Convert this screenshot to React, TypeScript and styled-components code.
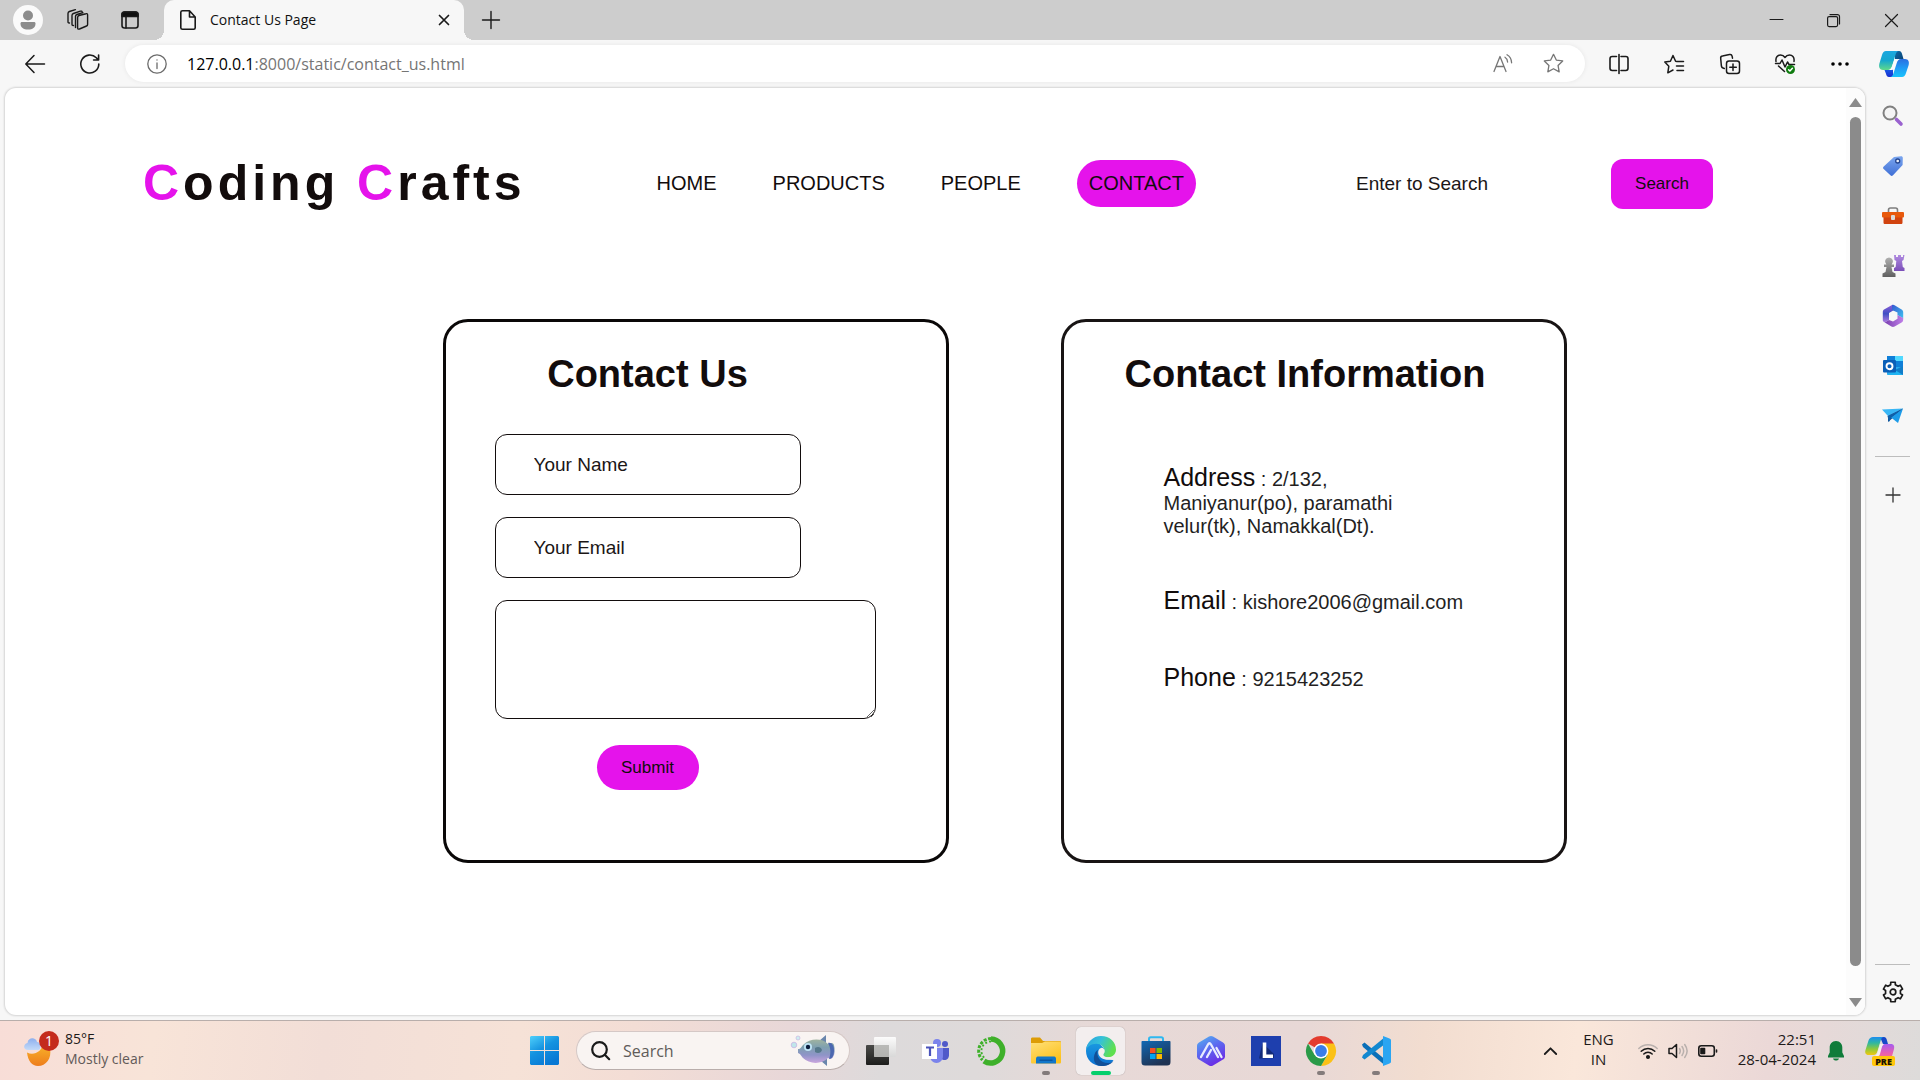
import React from 'react';
import styled, { createGlobalStyle, css } from 'styled-components';

const ui = `"Segoe UI", "Open Sans", "Noto Sans", sans-serif`;
const arial = `Arial, "Liberation Sans", sans-serif`;
const accent = '#e513eb';

const GlobalStyle = createGlobalStyle`
  *, *::before, *::after { box-sizing: border-box; }
  body { margin: 0; }
  button, input, textarea { font-family: inherit; margin: 0; }
  button { border: 0; background: none; padding: 0; }
  h1, h2, p, ul { margin: 0; padding: 0; }
  svg { display: block; overflow: visible; }
`;

/* ---------- window shell ---------- */

const Screen = styled.div`
  display: flex;
  flex-direction: column;
  height: 100vh;
  background: #f7f7f7;
  font-family: ${ui};
  overflow: hidden;
`;

const IconButton = styled.button<{ $w: number; $h?: number }>`
  display: flex;
  flex: none;
  align-items: center;
  justify-content: center;
  width: ${p => p.$w}px;
  height: ${p => (p.$h ? `${p.$h}px` : '100%')};
  color: #111;
`;

const TitleBar = styled.div`
  display: flex;
  flex: none;
  height: 40px;
  padding-left: 3px;
  background: #cdcdcd;
`;

const Tab = styled.div`
  position: relative;
  display: flex;
  align-items: center;
  width: 300px;
  margin-left: 8px;
  padding: 0 10px 0 16px;
  border-radius: 10px 10px 0 0;
  background: #f7f7f7;

  &::before, &::after {
    content: '';
    position: absolute;
    bottom: 0;
    width: 10px;
    height: 10px;
  }
  &::before { right: 100%; background: radial-gradient(circle at 0 0, #cdcdcd 10px, #f7f7f7 10px); }
  &::after { left: 100%; background: radial-gradient(circle at 100% 0, #cdcdcd 10px, #f7f7f7 10px); }
`;

const TabTitle = styled.span`
  flex: 1;
  padding-left: 14px;
  font-size: 14px;
  line-height: 20px;
  color: #111;
`;

const WindowControls = styled.div`
  display: flex;
  margin-left: auto;
`;

const Toolbar = styled.div`
  display: flex;
  flex: none;
  align-items: center;
  height: 47px;
  padding-left: 13px;
`;

const NavButtons = styled.div`
  display: flex;
  gap: 11px;
  margin-right: 13px;
`;

const AddressBar = styled.div`
  display: flex;
  flex: 1;
  align-items: center;
  height: 37px;
  margin-right: 6px;
  padding: 0 7px 0 12px;
  border-radius: 19px;
  background: #fff;
  box-shadow: 0 0 5px rgba(0, 0, 0, 0.07);
`;

const Url = styled.div`
  flex: 1;
  padding-left: 10px;
  font-size: 16px;
  line-height: 24px;
  color: #757575;
`;

const UrlHost = styled.span`
  color: #000;
`;

const Main = styled.div`
  display: flex;
  flex: 1;
  min-height: 0;
`;

const Frame = styled.div`
  display: flex;
  flex: 1;
  margin: 1px 0 5px 5px;
  border-radius: 11px;
  background: #fff;
  box-shadow: 0 0 2px 1px rgba(0, 0, 0, 0.14);
  overflow: hidden;
`;

const ScrollTrack = styled.div`
  display: flex;
  flex: none;
  flex-direction: column;
  align-items: center;
  gap: 10px;
  width: 19px;
  padding: 10px 0 8px;
  background: #fcfcfc;
`;

const ScrollThumb = styled.div`
  flex: 1;
  width: 11px;
  margin-bottom: 22px;
  border-radius: 6px;
  background: #8b8b8b;
`;

const Sidebar = styled.aside`
  display: flex;
  flex: none;
  flex-direction: column;
  align-items: center;
  width: 55px;
  padding: 4px 0 3px;
`;

const Rule = styled.hr<{ $push?: boolean }>`
  width: 35px;
  height: 1px;
  margin: ${p => (p.$push ? 'auto' : '15px')} 0 ${p => (p.$push ? '2px' : '13px')};
  border: 0;
  background: #bdbdbd;
`;

/* ---------- web page ---------- */

const Page = styled.div`
  flex: 1;
  min-width: 0;
  padding-top: 67px;
  font-family: ${arial};
  color: #120c0c;
`;

const Header = styled.header`
  display: flex;
  align-items: center;
  padding: 0 133px 0 138px;
`;

const Logo = styled.h1`
  font-size: 50px;
  font-weight: bold;
  line-height: 57px;
  letter-spacing: 4px;
  white-space: nowrap;
`;

const Initial = styled.span`
  color: ${accent};
`;

const Menu = styled.nav`
  display: flex;
  align-items: center;
  gap: 56px;
  margin-left: 131px;
`;

const MenuLink = styled.a<{ $active?: boolean }>`
  font-size: 20px;
  line-height: 23px;
  color: #120c0c;
  text-decoration: none;
  ${p => p.$active && css`
    padding: 12px;
    border-radius: 25px;
    background: ${accent};
  `}
`;

const fieldText = css`
  font-size: 19px;
  color: #120c0c;
  outline: 0;
  &::placeholder { color: #1b1616; opacity: 1; }
`;

const SearchForm = styled.form`
  display: flex;
  align-items: center;
  gap: 24px;
  margin-left: auto;
`;

const SearchInput = styled.input`
  ${fieldText}
  width: 270px;
  height: 50px;
  padding: 0 39px;
  border: 0;
  background: transparent;
`;

const ActionButton = styled.button<{ $round?: boolean }>`
  width: 102px;
  height: ${p => (p.$round ? 45 : 50)}px;
  border-radius: ${p => (p.$round ? 25 : 12)}px;
  background: ${accent};
  font-size: 17px;
  color: #120c0c;
`;

const Cards = styled.main`
  display: flex;
  justify-content: center;
  gap: 112px;
  margin-top: 107px;
  padding-left: 158px;
`;

const Card = styled.section<{ $pad: string; $tone: string }>`
  width: 506px;
  padding: ${p => p.$pad};
  border: 3px solid ${p => p.$tone};
  border-radius: 25px;
`;

const CardTitle = styled.h2`
  font-size: 38px;
  font-weight: bold;
  line-height: 44px;
  white-space: nowrap;
`;

const ContactForm = styled.form`
  display: grid;
  grid-template-columns: 306px 1fr;
  row-gap: 22px;

  & > * { grid-column: 1; }
  & > ${CardTitle} { margin-bottom: 16px; text-align: center; }
  & > ${ActionButton} { justify-self: center; margin-top: 4px; }
`;

const boxed = css`
  ${fieldText}
  border: 1px solid #120c0c;
  border-radius: 12px;
  background: transparent;
`;

const TextField = styled.input`
  ${boxed}
  width: 100%;
  height: 61px;
  padding: 0 38px;
`;

const MessageField = styled.textarea`
  ${boxed}
  && { grid-column: 1 / -1; }
  display: block;
  height: 119px;
  padding: 12px 38px;
  resize: both;
`;

const InfoList = styled.div`
  display: flex;
  flex-direction: column;
  gap: 48px;
  margin: 67px 0 0 39px;
`;

const InfoLine = styled.p`
  font-size: 20px;
  white-space: nowrap;
  color: #241f1f;
`;

const InfoLabel = styled.span`
  font-size: 25px;
  color: #120c0c;
`;

/* ---------- taskbar ---------- */

const Taskbar = styled.footer`
  display: grid;
  flex: none;
  grid-template-columns: 1fr auto 1fr;
  align-items: center;
  height: 60px;
  border-top: 1px solid #b8aeab;
  background: linear-gradient(96deg, #f8ddd7 0%, #f8e4d8 8%, #f2ded7 17%, #f6e2d7 27%, #f3ddd5 33%, #e8d7d8 41%,
    #dddadb 46%, #dedada 51%, #e7d9d7 57%, #e8d8d6 68%, #f2ddd0 74%, #fae7da 82%, #ebd8d7 92%, #dddbda 100%);
`;

const TwoLines = styled.span<{ $align?: string }>`
  display: flex;
  flex-direction: column;
  padding-bottom: 4px;
  font-size: 15px;
  line-height: 20px;
  text-align: ${p => p.$align || 'left'};
  color: #1d1a19;
`;

const Weather = styled.button`
  display: flex;
  align-items: center;
  gap: 12px;
  justify-self: start;
  padding: 0 0 4px 24px;
  text-align: left;

  ${TwoLines} { padding-bottom: 0; font-size: 14px; }
`;

const Muted = styled.span`
  color: #625a58;
`;

const Apps = styled.div`
  display: flex;
  align-items: center;
  height: 59px;
`;

const AppButton = styled.button<{ $mark?: 'open' | 'active' }>`
  position: relative;
  display: flex;
  align-items: center;
  justify-content: center;
  width: 49px;
  height: 48px;
  margin: 0 3px;
  border-radius: 5px;
  background: ${p => (p.$mark === 'active' ? '#f3eeee' : 'none')};
  box-shadow: ${p => (p.$mark === 'active' ? '0 0 1px rgba(0,0,0,.35)' : 'none')};

  &::after {
    content: '';
    position: absolute;
    bottom: 0;
    display: ${p => (p.$mark ? 'block' : 'none')};
    width: ${p => (p.$mark === 'active' ? 20 : 8)}px;
    height: 4px;
    border-radius: 2px;
    background: ${p => (p.$mark === 'active' ? '#06cf6c' : '#837b7b')};
  }
`;

const TaskSearch = styled.label`
  display: flex;
  align-items: center;
  width: 274px;
  height: 39px;
  margin: 0 3px 0 4px;
  padding: 0 14px;
  border: 1px solid #d5c8c6;
  border-bottom-color: #b9adab;
  border-radius: 20px;
  background: #f9f4f2;
`;

const TaskSearchInput = styled.input`
  flex: 1;
  min-width: 0;
  padding: 0 0 0 13px;
  border: 0;
  outline: 0;
  background: none;
  font-size: 16px;
  &::placeholder { color: #605b59; opacity: 1; }
`;

const Tray = styled.div`
  display: flex;
  align-items: center;
  justify-self: end;
  padding-right: 15px;
`;

const Language = styled.button`
  margin-left: 18px;
`;

const TrayGroup = styled.button`
  display: flex;
  align-items: center;
  gap: 10px;
  margin: 0 20px 0 24px;
`;

/* ---------- drawings ---------- */

type GlyphProps = { w?: number; h?: number; sw?: number; color?: string; children: React.ReactNode };

const Glyph = ({ w = 20, h = w, sw = 1.4, color = '#1a1a1a', children }: GlyphProps) => (
  <svg width={w} height={h} viewBox={`0 0 ${w} ${h}`} fill="none" stroke={color} strokeWidth={sw}
    strokeLinecap="round" strokeLinejoin="round" aria-hidden="true">{children}</svg>
);

const Art = ({ w = 30, h = w, box, children }: { w?: number; h?: number; box?: string; children: React.ReactNode }) => (
  <svg width={w} height={h} viewBox={box || `0 0 ${w} ${h}`} aria-hidden="true">{children}</svg>
);

const Grad = ({ id, stops, x2 = 0, y2 = 1 }: { id: string; stops: string[]; x2?: number; y2?: number }) => (
  <linearGradient id={id} x1="0" y1="0" x2={x2} y2={y2}>
    {stops.map((c, i) => <stop key={i} offset={i / (stops.length - 1)} stopColor={c} />)}
  </linearGradient>
);

const Plus = () => <Glyph w={18}><path d="M9 0.5v17M0.5 9h17" /></Glyph>;

const Star = 'M12 1.5l3.2 6.6 7.3 1-5.3 5.1 1.3 7.3L12 18l-6.5 3.5 1.3-7.3L1.5 9.1l7.3-1z';

const CopilotIcon = () => (
  <Art w={30} h={28}>
    <defs>
      <Grad id="cpA" stops={['#1ba7e0', '#16a8cf', '#5fd98a']} />
      <Grad id="cpB" stops={['#2b6fe0', '#1f9bf5', '#19c3fb']} />
      <Grad id="cpC" stops={['#0d6aa8', '#0b3f70']} x2={1} />
      <Grad id="cpD" stops={['#1660e8', '#1a2fd0']} />
    </defs>
    <path d="M16 1h4c2 0 2.600 1.500 3.200 3.500L24.500 9h-4C18.500 9 17 9 16 11z" fill="url(#cpC)" />
    <path d="M14 27h-4c-2 0-2.500-1.500-3.100-3.500L5.500 20h4.500c2 0 3 0 4-2z" fill="url(#cpD)" />
    <path d="M7 1h13c-2 0-3 2-3.600 4l-3 10.500c-.8 2.800-2 4.500-4.400 4.500H4c-3.500 0-4.500-3-3.600-6.500L3 5C3.800 2.300 5 1 7 1z" fill="url(#cpA)" />
    <path d="M23 27H11c2 0 3-2 3.600-4l3-9.500C18.500 10.500 19.600 9 22 9h4c3.500 0 4.500 3 3.600 6.200L27 23c-.8 2.700-2 4-4 4z" fill="url(#cpB)" />
    <path d="M15.500 9h4c-1.500 1-2 2.500-2.600 4.500l-1.400 4.500c-.5 1.300-1.300 2-2.500 2h-3c1.700-.8 2.500-2.200 3.200-4.500z" fill="#f9fbfc" />
  </Art>
);

const CopilotPreview = () => (
  <Art w={30} h={30}>
    <defs>
      <Grad id="pvA" stops={['#1c8df0', '#2fb7a0', '#8fc93a', '#f2c810']} />
      <Grad id="pvB" stops={['#a55cf0', '#e85fb0', '#fb7f70']} />
    </defs>
    <path d="M15 1h4c1.500 0 2.200 1 2.700 2.500L23 8h-5z" fill="#1748c9" />
    <path d="M8 1h11c-2 0-3 2-3.500 4l-3 10c-.7 2.500-2 4-4 4H3.500C.5 19-.3 16.500.5 14L3.500 4.500C4.200 2.200 6 1 8 1z" fill="url(#pvA)" />
    <path d="M23 26H10c2 0 3-2 3.500-4l2.500-9.500C16.800 9.500 18 8 20 8h6c2.800 0 3.700 2.300 3 5l-2.500 9C26 24 25 26 23 26z" fill="url(#pvB)" />
    <path d="M15 8h4c-1.500 1-2 2.500-2.500 4.500L15 18c-.4 1.300-1 2-2.200 2H10c1.500-.8 2.200-2.200 2.800-4.500z" fill="#f4eeee" />
    <rect x="7" y="20" width="23" height="10" rx="2" fill="#ffc60a" />
    <text x="18.500" y="28.500" textAnchor="middle" fontFamily={ui} fontSize="9" fontWeight="800" fill="#1a1200">PRE</text>
  </Art>
);

const SideSearch = () => (
  <Art w={22}>
    <circle cx="8" cy="8" r="6.500" fill="#f4f4f4" stroke="#808080" strokeWidth="2" />
    <path d="M14.500 14.500l4.500 4.500" stroke="#9a62cf" strokeWidth="3.600" strokeLinecap="round" />
  </Art>
);

const SideTag = () => (
  <Art w={22}>
    <defs><Grad id="tg" stops={['#7ba6ee', '#3f6fd6']} /></defs>
    <path d="M12 2l7-.8c1.300 0 1.800.6 1.800 1.800L20.600 10 11 20.300c-.9.9-1.700.9-2.600 0L1.700 14c-.9-.9-.9-1.700 0-2.600z" fill="url(#tg)" />
    <circle cx="15.700" cy="6" r="2" fill="#e8effc" stroke="#24458f" strokeWidth="1.300" />
  </Art>
);

const SideToolbox = () => (
  <Art w={22} h={18}>
    <path d="M6.500 6V3c0-1.500.6-2 2-2h5c1.400 0 2 .5 2 2v3" fill="none" stroke="#7d7d7d" strokeWidth="1.600" />
    <path d="M1.500 9h19v6.500c0 1.100-.6 1.500-1.500 1.500H3c-.9 0-1.500-.4-1.500-1.500z" fill="#d1430f" />
    <rect x="0" y="5" width="22" height="5.500" rx="1" fill="#e8590c" />
    <rect x="9" y="8" width="4" height="5" rx="1" fill="#dadada" />
  </Art>
);

const SideGames = () => (
  <Art w={22}>
    <defs><Grad id="rk" stops={['#b08be0', '#7b4fb8']} /><Grad id="pw" stops={['#b0b0b0', '#606060']} /></defs>
    <path d="M12 0h2v2h2V0h3v2h2V0h1.500l-1 5-1.500 1 .8 6 1.700 1v3H12v-3l1.700-1 .6-6-1.800-1z" fill="url(#rk)" />
    <path d="M7 2.500a4 4 0 0 1 2.600 7H12v2.500H9.500l1 5 3 1.500v3.500H.5v-3.500l3-1.500 1-5H2V9.500h2.400a4 4 0 0 1 2.600-7z" fill="url(#pw)" />
  </Art>
);

const SideM365 = () => (
  <Art w={22}>
    <defs>
      <Grad id="mA" stops={['#8a5bd6', '#3f4fc4', '#b07be0']} />
      <Grad id="mB" stops={['#3558d0', '#3fc1f0']} x2={1} />
      <Grad id="mC" stops={['#7a3fb0', '#c080e8']} x2={1} y2={0} />
    </defs>
    <path d="M10 0L2.500 4.200C1.200 5 .8 5.800.8 7.200v8c0 1 .8 1.800 2 2.300L7 15V8l5-3z" fill="url(#mA)" />
    <path d="M10 0c1-.4 2-.2 3 .4l6.600 4c1 .6 1.600 1.600 1.600 2.800v6L15.500 10V7.500L10 5z" fill="url(#mB)" />
    <path d="M21.200 13v1.800c0 1.200-.6 2.200-1.600 2.800l-7 4c-1 .6-2.200.6-3.200 0L2.800 17.500 7 15l4 1.500 4.500-2.800V10z" fill="url(#mC)" />
  </Art>
);

const SideOutlook = () => (
  <Art w={22}>
    <rect x="5" y="1" width="16" height="19" rx="1" fill="#28a8ea" />
    <path d="M5 1h8v5H5zM13 6h8v6h-8z" fill="#0f7fd8" />
    <path d="M13 1h8v5h-8z" fill="#50d9ff" />
    <path d="M5 20l16-8.500V20z" fill="#1fb4f2" /><path d="M21 20l-8-5 8-4z" fill="#117dc9" />
    <rect x="1" y="5" width="13" height="12.500" rx="1" fill="#0a5fb8" />
    <circle cx="7.500" cy="11.200" r="3" fill="none" stroke="#fff" strokeWidth="1.900" />
  </Art>
);

const SidePlane = () => (
  <Art w={22} h={16}>
    <path d="M0 1.500L21 .5 6 8z" fill="#38b6f5" />
    <path d="M21 .5L6 8l0 6 3.500-3z" fill="#0d4f94" />
    <path d="M21 .5L9 9.500l7 5.500z" fill="#1c9be8" />
    <path d="M5.500 8L21 .5 9 9.500 7 14z" fill="#0f5fa8" />
  </Art>
);

const Gear = () => {
  const pts = Array.from({ length: 6 }, (_, i) => {
    const at = (deg: number, r: number) => {
      const a = ((i * 60 + deg) * Math.PI) / 180;
      return `${(11 + r * Math.sin(a)).toFixed(2)} ${(11 - r * Math.cos(a)).toFixed(2)}`;
    };
    return `${at(-13, 10)}L${at(13, 10)}L${at(18, 7.6)}L${at(42, 7.6)}`;
  });
  return <Glyph w={22} sw={1.7}><path d={`M${pts.join('L')}Z`} /><circle cx="11" cy="11" r="2.800" /></Glyph>;
};

const WeatherIcon = () => (
  <Art w={29} h={36}>
    <defs><Grad id="moon" stops={['#f8b62a', '#ee7d1c']} /><Grad id="cloud" stops={['#8db0ee', '#c4daf8']} /></defs>
    <path d="M3 21.500c7 3.500 15-1 16-9l7 5c2 10-4 17.500-12 17.500-6 0-10-5-11-13.500z" fill="url(#moon)" />
    <path d="M4 19c-5 0-5-6-.5-7C4 6 12 6 13 11c4 0 5 8 1 8z" fill="url(#cloud)" />
    <circle cx="25" cy="10" r="10" fill="#c42b1c" />
    <text x="25" y="15" textAnchor="middle" fontFamily={ui} fontSize="14" fill="#fff">1</text>
  </Art>
);

const WindowsIcon = () => (
  <Art w={29}>
    <defs><Grad id="win" stops={['#4fd0fb', '#1593e0', '#0878d4']} x2={0.6} /></defs>
    <path d="M1 0h13v14H0V1zM15 0h13l1 1v13H15zM0 15h14v14H1l-1-1zM15 15h14v13l-1 1H15z" fill="url(#win)" />
  </Art>
);

const Fish = () => (
  <Art w={44} h={32}>
    <defs><Grad id="fish" stops={['#9fb3a0', '#7fa0b0', '#8f94c8', '#c9a5dd']} /></defs>
    <path d="M28 6l7-6v10zM30 26l6 5V22z" fill="#6a86ac" />
    <path d="M7 14c3 0 3-2 5-4 7-7 19-7 25-1 2-1 5-2 6 1 1 4 1 9-1 12-1 2-3 2-5 1-7 7-19 6-25 0-2-2-2-4-5-5z" fill="url(#fish)" />
    <path d="M37 8c4-1 6 3 6 7s-1 9-5 9c2-5 2-11-1-16z" fill="#4c68b0" />
    <path d="M24 13c3-2 6-1 7 2-1 3-4 4-7 2z" fill="#55788a" />
    <circle cx="17" cy="12" r="4" fill="#bfe4f5" /><circle cx="17" cy="12" r="2.200" fill="#0c1c3c" />
    <circle cx="3" cy="10" r="2.800" fill="#bfe6ea" stroke="#c9b5e2" strokeWidth=".8" />
    <circle cx="7" cy="3" r="2" fill="#cdeef0" stroke="#c9b5e2" strokeWidth=".7" />
  </Art>
);

const TaskViewIcon = () => (
  <Art w={30}>
    <defs><Grad id="tv" stops={['#4a4a48', '#1d1d1c']} /><Grad id="tw" stops={['#ffffff', '#d8d8d8']} /></defs>
    <rect x="0" y="9" width="23" height="20" rx="1" fill="url(#tv)" />
    <rect x="8" y="1" width="22" height="20" rx="1" fill="url(#tw)" fillOpacity=".9" />
    <path d="M8 9h15v12H8z" fill="#a9a9a7" fillOpacity=".7" />
  </Art>
);

const TeamsIcon = () => (
  <Art w={28} h={26}>
    <circle cx="15" cy="5" r="4" fill="#7b83eb" /><circle cx="23" cy="6" r="3" fill="#5059c9" />
    <path d="M18 10h9v7c0 3-2 5-4.500 5S18 20 18 17z" fill="#5059c9" />
    <path d="M8 10h13v8c0 4-3 7-6.500 7S8 22 8 18z" fill="#7b83eb" />
    <rect x="0" y="6" width="15" height="15" fill="#fff" />
    <path d="M4 9.500h8M8 9.500v8.500" stroke="#4b53bc" strokeWidth="2.200" />
  </Art>
);

const RingIcon = () => (
  <Art w={30}>
    <path d="M15 3a12 12 0 1 1-7 22" fill="none" stroke="#3eb02a" strokeWidth="5.500" />
    <path d="M15 2.500A12.500 12.500 0 0 0 6.500 24" fill="none" stroke="#3eb02a" strokeWidth="3" strokeDasharray="3 1.500" />
    <path d="M15 5.500A9.500 9.500 0 0 0 8.500 22" fill="none" stroke="#3eb02a" strokeWidth="1.800" strokeDasharray="2 2" />
  </Art>
);

const FolderIcon = () => (
  <Art w={30} h={28}>
    <defs><Grad id="fold" stops={['#ffe07a', '#fcc21f']} y2={1} x2={0.6} /></defs>
    <path d="M0 2c0-1 .5-1.500 1.500-1.500H9L12 4h16.500c1 0 1.500.5 1.500 1.500V10H0z" fill="#dd9c05" />
    <path d="M0 6h11l3-1.500h14.500c1 0 1.500.5 1.500 1.500v19c0 1-.5 1.500-1.500 1.500h-27C.5 26.500 0 26 0 25z" fill="url(#fold)" />
    <path d="M5 22c0-2 1-2.500 2.500-2.500h15c1.500 0 2.500.5 2.500 2.500v4.500H5z" fill="#1277ca" />
    <path d="M8.500 23.200h13" stroke="#0a4f98" strokeWidth="1.200" />
  </Art>
);

const EdgeIcon = () => (
  <Art w={30} box="0 0 24 24">
    <defs>
      <Grad id="edA" stops={['#2a9fe0', '#35c1d9', '#5fe04f']} x2={1} y2={0.4} />
      <Grad id="edB" stops={['#1b9de2', '#0b6fd0']} />
    </defs>
    <path d="M0 12C0 5 5.500 3 9 4l5.500 6-1 8 8.500 1.300C19.800 22.500 16 24 12.300 24 5.500 24 0 18.800 0 12z" fill="url(#edB)" />
    <path d="M9.500 11c-2 6 3 11.500 9.500 10.500 1.500-.3 2.500-1 2.800-1.300C19.500 23 16 24 12.500 24 8 24 6 20.500 6.300 17c.3-3 1.600-5 3.200-6z" fill="#114f97" />
    <path d="M0 11.500C.5 5 5.500 0 12 0c7 0 12 5 12 10.800 0 3.600-2.700 6.200-6.200 6.200-3 0-4-1.200-4-2 0-.7 1-1 1-3C14.800 9 12 6.200 8.300 6.200 4 6.200.7 8.500 0 11.500z" fill="url(#edA)" />
    <path d="M14.800 12c0 2-1 2.300-1 3 0 .8 1 2 4 2 1.700 0 3.200-.4 4.200-1.300l-.2 2.300c-5 2.500-11.500 0-12-4.500-.2-2 .8-3.700 2.400-4 1.600-.2 2.600 1 2.600 2.500z" fill="#f3eeee" />
  </Art>
);

const StoreIcon = () => (
  <Art w={30}>
    <defs><Grad id="st" stops={['#1168b4', '#1f3353']} x2={0.5} /></defs>
    <path d="M8 7V3c0-1 .5-1.800 1.800-1.800h10.400C21.500 1.200 22 2 22 3v4" fill="none" stroke="#2fb8f0" strokeWidth="2" />
    <path d="M1.500 5h27c.6 0 1 .3 1 1v20c0 2.500-1 3.500-3.500 3.500H4C1.500 29.500.5 28.500.5 26V6c0-.7.4-1 1-1z" fill="url(#st)" />
    <path d="M9 12h5.500v5H9z" fill="#f25022" /><path d="M15.500 12H21v5h-5.500z" fill="#7fba00" />
    <path d="M9 18h5.500v5H9z" fill="#00a4ef" /><path d="M15.500 18H21v5h-5.500z" fill="#ffb900" />
  </Art>
);

const HexIcon = () => (
  <Art w={28} h={30}>
    <defs><Grad id="hx" stops={['#53b8f0', '#5b6af0', '#6a2fe6']} x2={0.5} /></defs>
    <path d="M12 .6c1.300-.7 2.700-.7 4 0l10 5.800c1.300.8 2 1.800 2 3.400v10.400c0 1.600-.7 2.600-2 3.400l-10 5.800c-1.300.7-2.700.7-4 0L2 23.600c-1.300-.8-2-1.800-2-3.400V9.800c0-1.600.7-2.600 2-3.400z" fill="url(#hx)" />
    <path d="M4 21l7-12.500c1-1.700 2-1.700 3 0L21 21M10 21l4-7M19.500 12l5 9" fill="none" stroke="#e8ecff" strokeWidth="2.300" strokeLinecap="round" />
  </Art>
);

const LIcon = () => (
  <Art w={30}>
    <path d="M0 0h30v30H0z" fill="#1e3fae" />
    <path d="M11.500 7L8 22.500h5L23 22v-4z" fill="#122a78" />
    <path d="M13.500 6.500V20.200H22" fill="none" stroke="#fff" strokeWidth="3.600" />
  </Art>
);

const ChromeIcon = () => (
  <Art w={30}>
    <path d="M15 15L2 7.500A15 15 0 0 1 28 7.500z" fill="#e33b2e" />
    <path d="M15 15V7.500h13A15 15 0 0 1 15 30l6.500-11z" fill="#fbc116" />
    <path d="M15 15l6.500 3.700L15 30A15 15 0 0 1 2 7.500l6.500 11.300z" fill="#2a9a48" />
    <circle cx="15" cy="15" r="7.400" fill="#fff" /><circle cx="15" cy="15" r="5.900" fill="#3a7de8" />
  </Art>
);

const CodeIcon = () => (
  <Art w={30}>
    <path d="M1 8.500l2.500-2 20 16.500V29L2 11z" fill="#0a6fb8" />
    <path d="M1 21.500l2.500 2L24 8V1L2 19z" fill="#1288d0" />
    <path d="M22 0l6.500 2.500c1 .5 1.500 1 1.500 2v21c0 1-.5 1.500-1.500 2L22 30z" fill="#2aa5f2" />
  </Art>
);

/* ---------- content ---------- */

const sideItems: [string, React.ReactNode][] = [
  ['Search', <SideSearch />], ['Shopping', <SideTag />], ['Tools', <SideToolbox />], ['Games', <SideGames />],
  ['Microsoft 365', <SideM365 />], ['Outlook', <SideOutlook />], ['Drop', <SidePlane />],
];

const apps: [string, React.ReactNode, ('open' | 'active')?][] = [
  ['Task view', <TaskViewIcon />], ['Teams', <TeamsIcon />], ['Anaconda', <RingIcon />],
  ['File Explorer', <FolderIcon />, 'open'], ['Edge', <EdgeIcon />, 'active'], ['Store', <StoreIcon />],
  ['Assistant', <HexIcon />], ['Launcher', <LIcon />], ['Chrome', <ChromeIcon />, 'open'],
  ['Visual Studio Code', <CodeIcon />, 'open'],
];

const BrowserTitleBar = () => (
  <TitleBar>
    <IconButton $w={50} aria-label="Profile">
      <Art w={30}><circle cx="15" cy="15" r="15" fill="#fafafa" /><circle cx="15" cy="10.500" r="5" fill="#8c8c8c" />
        <path d="M7.500 18.500c0-1 .6-1.500 1.500-1.500h12c.9 0 1.500.5 1.500 1.500 0 4-3 6-7.500 6s-7.500-2-7.500-6z" fill="#8c8c8c" /></Art>
    </IconButton>
    <IconButton $w={50} aria-label="Workspaces">
      <Glyph w={22}><path d="M12 6.500l7-1.800c1-.3 1.600.2 1.600 1.200v9.500c0 .8-.3 1.300-1.100 1.600l-7 3c-1 .4-1.900 0-1.900-1.100V8.500c0-1 .5-1.700 1.400-2zM6.500 16.500c-1 .2-1.500-.3-1.500-1.200V6.500c0-1 .5-1.700 1.400-2l7-2.300c1-.3 1.800 0 1.800 1M2.500 14c-1 .2-1.500-.3-1.500-1.200V4.500c0-1 .5-1.700 1.400-2l6-1.900M8.500 18.500V7.500c0-1 .5-1.700 1.400-2l6-1.900" /></Glyph>
    </IconButton>
    <IconButton $w={53} aria-label="Tab actions">
      <Glyph w={18} sw={1.6}><rect x="1" y="1" width="16" height="16" rx="2.500" /><path d="M1 3.500A2.500 2.500 0 0 1 3.500 1h11A2.500 2.500 0 0 1 17 3.500V5.500H1z" fill="#111" /><path d="M5 6v11" /></Glyph>
    </IconButton>
    <Tab>
      <Glyph w={16} h={20} sw={1.6}><path d="M2.500.8h7L15.200 7v10.700c0 1-.6 1.500-1.500 1.500H2.500C1.500 19.200.8 18.700.8 17.700V2.300c0-1 .7-1.500 1.700-1.500zM9.500.8V7h5.700" /></Glyph>
      <TabTitle>Contact Us Page</TabTitle>
      <IconButton $w={20} aria-label="Close tab"><Glyph w={10} sw={1.7}><path d="M.5.5l9 9M9.500.5l-9 9" /></Glyph></IconButton>
    </Tab>
    <IconButton $w={53} aria-label="New tab"><Plus /></IconButton>
    <WindowControls>
      <IconButton $w={58} aria-label="Minimise"><Glyph w={13} h={2} sw={1}><path d="M0 .5h13" /></Glyph></IconButton>
      <IconButton $w={57} aria-label="Restore"><Glyph w={13} sw={1.2}><rect x=".6" y="2.600" width="10" height="10" rx="1.500" /><path d="M3 .6h7.500a2 2 0 0 1 2 2V10" /></Glyph></IconButton>
      <IconButton $w={58} aria-label="Close"><Glyph w={13} sw={1.2}><path d="M.5.5l12 12M12.500.5l-12 12" /></Glyph></IconButton>
    </WindowControls>
  </TitleBar>
);

const BrowserToolbar = () => (
  <Toolbar>
    <NavButtons>
      <IconButton $w={44} aria-label="Back"><Glyph sw={1.5}><path d="M19.500 10H1M9 1.500L.8 10 9 18.500" /></Glyph></IconButton>
      <IconButton $w={44} aria-label="Refresh"><Glyph sw={1.6}><path d="M18.800 10a9 9 0 1 1-2.500-6.200L18 5.600M18.600 1v5h-5" /></Glyph></IconButton>
    </NavButtons>
    <AddressBar>
      <IconButton $w={40} aria-label="Site information"><Glyph color="#6b6b6b" sw={1.3}><circle cx="10" cy="10" r="9.200" /><path d="M10 9v5.500M10 5.800v.3" /></Glyph></IconButton>
      <Url><UrlHost>127.0.0.1</UrlHost>:8000/static/contact_us.html</Url>
      <IconButton $w={50} aria-label="Read aloud"><Glyph color="#767676" sw={1.3}><path d="M1 17.500L7 2.500l6 15M3.200 12.500h7.600M12 3.200c1.700 1 2.500 2.600 2.600 4.800M14 .8c3 1.700 4.500 4.500 4.600 8" /></Glyph></IconButton>
      <IconButton $w={50} aria-label="Add to favourites"><svg width="21" height="21" viewBox="0 0 24 24" fill="none" stroke="#767676" strokeWidth="1.500" strokeLinejoin="round"><path d={Star} /></svg></IconButton>
    </AddressBar>
    <IconButton $w={55} aria-label="Split screen"><Glyph w={20} sw={1.6}><path d="M7.500 2.500H3.200C1.800 2.500 1 3.300 1 4.700v9.600c0 1.400.8 2.200 2.200 2.200h4.300M12 2.500h4.800c1.400 0 2.200.8 2.200 2.200v9.600c0 1.400-.8 2.200-2.200 2.200H12M10 .5v19" /></Glyph></IconButton>
    <IconButton $w={56} aria-label="Favourites"><Glyph w={20} sw={1.5}><path d="M13 7.500l-1.400-.2L9 1.500 6.400 7.300.8 8l4 4.300-1 6.500L9 16M13 7.500h6.500M12.500 12h7M13 16.500h6.500" /></Glyph></IconButton>
    <IconButton $w={55} aria-label="Collections"><Glyph w={20} sw={1.5}><rect x="6.500" y="7" width="13" height="12.500" rx="2.500" /><path d="M13 10v6.500M9.800 13.200h6.500M4.300 14.500L3 14c-1-.3-1.400-1-1.600-2L.7 4.500c-.2-1.300.4-2.200 1.700-2.400L9.500.6c1.300-.3 2.300.3 2.600 1.600l.4 2" /></Glyph></IconButton>
    <IconButton $w={55} aria-label="Browser essentials"><Glyph w={20} sw={1.5}><path d="M1 7.500C.3 3 3 1 5.500 1 7.500 1 9 2 10 3.500 11 2 12.500 1 14.500 1 17 1 19.700 3 19 7.500M.5 9.500H5L7 6l3 7 2.500-5 1.500 2.500h5.500M3.500 12l6 5.500" /><circle cx="15.500" cy="15.500" r="4.500" fill="#107c10" stroke="none" /><path d="M13.600 15.700l1.300 1.300 2.500-2.700" stroke="#fff" /></Glyph></IconButton>
    <IconButton $w={55} aria-label="Settings and more"><Art w={18} h={4}><circle cx="2" cy="2" r="1.800" /><circle cx="9" cy="2" r="1.800" /><circle cx="16" cy="2" r="1.800" /></Art></IconButton>
    <IconButton $w={53} aria-label="Copilot"><CopilotIcon /></IconButton>
  </Toolbar>
);

const ContactPage = () => (
  <Page>
    <Header>
      <Logo><Initial>C</Initial>oding <Initial>C</Initial>rafts</Logo>
      <Menu>
        <MenuLink href="#home">HOME</MenuLink>
        <MenuLink href="#products">PRODUCTS</MenuLink>
        <MenuLink href="#people">PEOPLE</MenuLink>
        <MenuLink href="#contact" $active>CONTACT</MenuLink>
      </Menu>
      <SearchForm onSubmit={e => e.preventDefault()}>
        <SearchInput type="text" placeholder="Enter to Search" aria-label="Enter to Search" />
        <ActionButton type="submit">Search</ActionButton>
      </SearchForm>
    </Header>
    <Cards>
      <Card $pad="30px 70px 70px 49px" $tone="#0a0808">
        <ContactForm onSubmit={e => e.preventDefault()}>
          <CardTitle>Contact Us</CardTitle>
          <TextField type="text" placeholder="Your Name" aria-label="Your Name" />
          <TextField type="email" placeholder="Your Email" aria-label="Your Email" />
          <MessageField aria-label="Message" />
          <ActionButton type="submit" $round>Submit</ActionButton>
        </ContactForm>
      </Card>
      <Card $pad="30px 30px 70px 61px" $tone="#181414">
        <CardTitle>Contact Information</CardTitle>
        <InfoList>
          <InfoLine>
            <InfoLabel>Address</InfoLabel> : 2/132,<br />
            Maniyanur(po), paramathi<br />
            velur(tk), Namakkal(Dt).
          </InfoLine>
          <InfoLine><InfoLabel>Email</InfoLabel> : kishore2006@gmail.com</InfoLine>
          <InfoLine><InfoLabel>Phone</InfoLabel> : 9215423252</InfoLine>
        </InfoList>
      </Card>
    </Cards>
  </Page>
);

const DesktopTaskbar = () => (
  <Taskbar>
    <Weather>
      <WeatherIcon />
      <TwoLines><span>85°F</span><Muted>Mostly clear</Muted></TwoLines>
    </Weather>
    <Apps>
      <AppButton aria-label="Start"><WindowsIcon /></AppButton>
      <TaskSearch>
        <Glyph w={19} sw={2.2}><circle cx="8.500" cy="8.500" r="7.300" /><path d="M13.800 13.800l4.400 4.400" /></Glyph>
        <TaskSearchInput type="text" placeholder="Search" aria-label="Search" />
        <Fish />
      </TaskSearch>
      {apps.map(([name, icon, mark]) => <AppButton key={name} aria-label={name} $mark={mark}>{icon}</AppButton>)}
    </Apps>
    <Tray>
      <IconButton $w={30} $h={40} aria-label="Hidden icons"><Glyph w={13} h={8} sw={1.8}><path d="M.8 7l5.700-5.700L12.200 7" /></Glyph></IconButton>
      <Language><TwoLines $align="center"><span>ENG</span><span>IN</span></TwoLines></Language>
      <TrayGroup aria-label="Network, volume and battery">
        <Glyph w={20} h={16} sw={1.5}><path d="M.8 5.500a13 13 0 0 1 18.400 0" stroke="#b9b0ad" /><path d="M3.200 8.300a9.600 9.600 0 0 1 13.600 0M5.800 11a6 6 0 0 1 8.400 0" /><circle cx="10" cy="14" r="1.300" fill="#1a1a1a" /></Glyph>
        <Glyph w={20} h={16} sw={1.5}><path d="M1 5.500h3L8.500 1.500v13L4 10.500H1z" /><path d="M11.500 5.500c1 1.500 1 3.500 0 5M14 3.500c2 2.700 2 6.300 0 9M16.700 1.500c3 4 3 9 0 13" stroke="#b9b0ad" /></Glyph>
        <Glyph w={20} h={12} sw={1.6}><rect x=".8" y=".8" width="15.500" height="10.400" rx="2.500" /><path d="M3 3.500h3.500v5H3zM18.500 5v2" fill="#1a1a1a" /></Glyph>
      </TrayGroup>
      <TwoLines $align="right"><span>22:51</span><span>28-04-2024</span></TwoLines>
      <IconButton $w={39} $h={40} aria-label="Notifications"><Art w={16} h={20}><path d="M8 0c4 0 6.300 3 6.300 6.500v5L16 15v1.500H0V15l1.700-3.500v-5C1.700 3 4 0 8 0zM5 17.500h6c-.5 1.500-1.500 2-3 2s-2.500-.5-3-2z" fill="#107c3a" /></Art></IconButton>
      <IconButton $w={50} $h={48} aria-label="Copilot preview"><CopilotPreview /></IconButton>
    </Tray>
  </Taskbar>
);

export default function App() {
  return (
    <Screen>
      <GlobalStyle />
      <BrowserTitleBar />
      <BrowserToolbar />
      <Main>
        <Frame>
          <ContactPage />
          <ScrollTrack aria-hidden="true">
            <Art w={13} h={9}><path d="M6.500 0L13 9H0z" fill="#8b8b8b" /></Art>
            <ScrollThumb />
            <Art w={13} h={9}><path d="M6.500 9L0 0h13z" fill="#8b8b8b" /></Art>
          </ScrollTrack>
        </Frame>
        <Sidebar>
          {sideItems.map(([name, icon]) => <IconButton key={name} $w={50} $h={50} aria-label={name}>{icon}</IconButton>)}
          <Rule />
          <IconButton $w={50} $h={50} aria-label="Customise"><Glyph w={14} sw={1.3} color="#333"><path d="M7 0v14M0 7h14" /></Glyph></IconButton>
          <Rule $push />
          <IconButton $w={50} $h={50} aria-label="Settings"><Gear /></IconButton>
        </Sidebar>
      </Main>
      <DesktopTaskbar />
    </Screen>
  );
}
